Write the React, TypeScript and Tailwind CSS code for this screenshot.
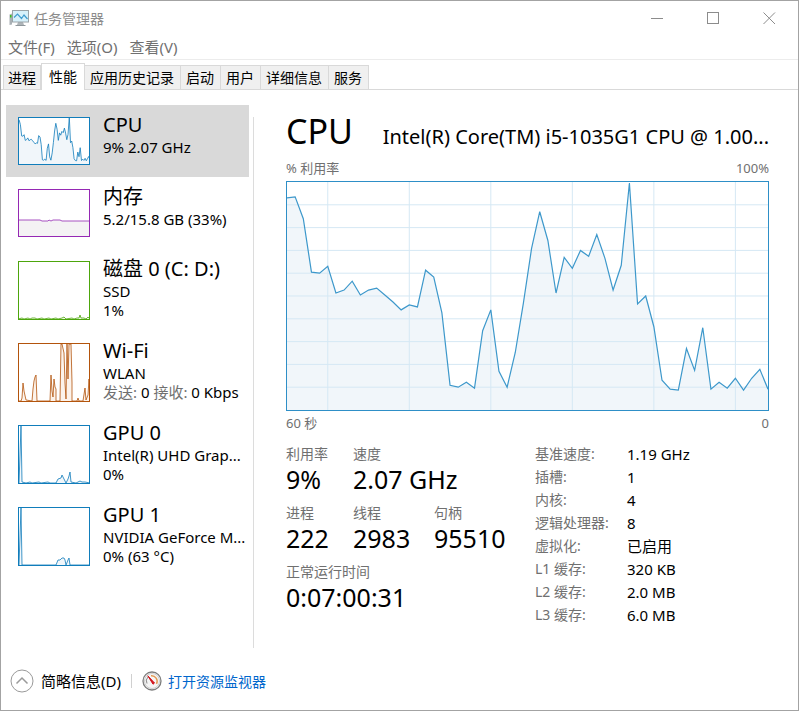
import { useState } from 'react';
import clsx from 'clsx';

const menus = ['文件(F)', '选项(O)', '查看(V)'];
const tabs = ['进程', '性能', '应用历史记录', '启动', '用户', '详细信息', '服务'];

// one sample per second, oldest first, 0..230
const cpuSamples = [
  214, 215, 193, 139, 138, 145, 118, 121, 130, 116, 121, 123, 116, 109, 101, 106, 104, 141, 134, 98,
  25, 23, 28, 22, 80, 101, 39, 23, 58, 108, 163, 200, 171, 118, 154, 143, 161, 155, 177, 153,
  121, 146, 229, 107, 115, 84, 30, 21, 20, 62, 40, 83, 21, 28, 22, 32, 20, 32, 41, 21,
];

const plot = (samples: number[], width: number, height: number) =>
  samples
    .map((v, i) => `${((i * width) / (samples.length - 1)).toFixed(1)},${(height - (v * height) / 230).toFixed(1)}`)
    .join(' ');

const resources = [
  {
    name: 'CPU',
    lines: ['9% 2.07 GHz'],
    height: 48,
    stroke: '#117dbb',
    fill: '#f1f6fa',
    points: plot(cpuSamples, 72, 48),
  },
  {
    name: '内存',
    lines: ['5.2/15.8 GB (33%)'],
    height: 48,
    stroke: '#9528b4',
    fill: '#f4f2f4',
    points: '0,31 22,31 24,32 30,32 31,31 33,32 35,31 42,31 44,32 72,32',
  },
  {
    name: '磁盘 0 (C: D:)',
    lines: ['SSD', '1%'],
    height: 59,
    stroke: '#4da60c',
    fill: '#eff7e9',
    points:
      '0,58 4,57 6,58 10,57 12,58 14,57 17,57 19,58 24,57 26,58 31,57 33,58 38,57 40,58 44,57 46,56 48,58 54,57 56,58 59,57 61,57 62,54 63,57 66,57 68,58 70,56 72,58',
  },
  {
    name: 'Wi-Fi',
    lines: ['WLAN'],
    height: 59,
    stroke: '#b3540c',
    fill: '#fcf3eb',
    points:
      '0,58 3,58 4,55 5,40 6,48 8,57 14,58 15,46 16,38 17,34 18,32 19,58 32,58 33,32 34,48 35,54 36,36 37,44 38,46 38,58 42,58 43,1 44,1 46,10 47,40 48,56 49,1 50,36 51,1 53,1 54,40 54,58 59,58 60,55 61,58 65,58 67,45 68,57 70,52 71,36 72,50',
  },
  {
    name: 'GPU 0',
    lines: ['Intel(R) UHD Grap...', '0%'],
    height: 59,
    stroke: '#117dbb',
    fill: '#f1f6fa',
    points:
      '0,58 1,58 3,1 4,57 8,58 12,57 14,58 21,57 23,58 30,57 32,58 38,58 40,54 43,53 44,50 46,54 48,58 50,54 51,51 52,47 53,57 58,58 60,57 62,56 64,57 67,57 72,58',
  },
  {
    name: 'GPU 1',
    lines: ['NVIDIA GeForce M...', '0% (63 °C)'],
    height: 59,
    stroke: '#117dbb',
    fill: '#f1f6fa',
    points: '0,58 1,58 3,1 4,58 38,58 40,53 42,53 44,51 46,51 47,53 48,58 50,53 51,51 52,58 62,58 72,58',
  },
];

const specs = [
  ['基准速度:', '1.19 GHz'],
  ['插槽:', '1'],
  ['内核:', '4'],
  ['逻辑处理器:', '8'],
  ['虚拟化:', '已启用'],
  ['L1 缓存:', '320 KB'],
  ['L2 缓存:', '2.0 MB'],
  ['L3 缓存:', '6.0 MB'],
];

function AppIcon() {
  return (
    <svg width="20" height="18" viewBox="0 0 20 18" fill="none">
      <path d="M0.5 5.5 3 4.5v11l-2.5.5z" fill="#a9b0b5" />
      <path d="M1 6h1.500v2.500H1z" fill="#39c01f" />
      <path d="M9 13h5l1 3H8z" fill="#aeb4b8" />
      <path d="M6.500 16.500h10" stroke="#8f979c" />
      <rect x="3.500" y="1.500" width="16" height="11.500" fill="#d6f1fb" stroke="#9aa3a8" />
      <path d="M5 8.500 8.500 5l4 4.500L15 6l3.500 4" stroke="#3f9ccf" strokeWidth="1.200" />
    </svg>
  );
}

function MonitorIcon() {
  return (
    <svg width="20" height="20" viewBox="0 0 20 20" fill="none">
      <circle cx="10" cy="10" r="9" fill="#f5f5f5" stroke="#7d7d7d" strokeWidth="1.300" />
      <circle cx="10" cy="10" r="7.500" stroke="#cfcfcf" />
      <path d="M5 12.500A5.500 5.500 0 0 1 6 6" stroke="#8a8a8a" />
      <path d="M9 4.800a5.500 5.500 0 0 1 5.500 8" stroke="#e39a55" strokeWidth="1.500" />
      <path d="M5.800 4.800 12.500 12l-1.500 1.200z" fill="#d3111b" stroke="#d3111b" />
    </svg>
  );
}

function Thumb({ height, stroke, fill, points }: { height: number; stroke: string; fill: string; points: string }) {
  return (
    <svg width="72" height={height} viewBox={`0 0 72 ${height}`} className="shrink-0">
      <rect width="72" height={height} fill="#fff" />
      <polygon points={`0,${height} ${points} 72,${height}`} fill={fill} />
      <polyline points={points} fill="none" stroke={stroke} strokeOpacity="0.8" />
      <rect x="0.5" y="0.5" width="71" height={height - 1} fill="none" stroke={stroke} />
    </svg>
  );
}

function CpuChart() {
  const points = plot(cpuSamples, 590, 230);
  return (
    <div className="h-[230px] border border-[#2e8fc7]">
      <svg className="block h-full w-full" viewBox="0 0 590 230" preserveAspectRatio="none">
        <polygon points={`0,230 ${points} 590,230`} fill="#f1f6fa" />
        {[50, 150, 250, 350, 450, 550].map((x) => (
          <line key={x} x1={x} x2={x} y1="0" y2="230" stroke="#d5e8f4" vectorEffect="non-scaling-stroke" />
        ))}
        {[23, 46, 69, 92, 115, 138, 161, 184, 207].map((y) => (
          <line key={y} x1="0" x2="590" y1={y} y2={y} stroke="#d5e8f4" vectorEffect="non-scaling-stroke" />
        ))}
        <polyline points={points} fill="none" stroke="#3d98cb" strokeWidth="1.2" vectorEffect="non-scaling-stroke" />
      </svg>
    </div>
  );
}

function Stat({ label, value, className }: { label: string; value: string; className?: string }) {
  return (
    <div className={className}>
      <dt className="text-[14px] leading-6 text-[#707070]">{label}</dt>
      <dd className="text-[25px] leading-[26px]">{value}</dd>
    </div>
  );
}

export default function App() {
  const [tab, setTab] = useState('性能');
  const [selected, setSelected] = useState('CPU');

  return (
    <div className="flex min-h-screen flex-col border border-[#a3a3a3] bg-white font-['Noto_Sans','Noto_Sans_CJK_SC',sans-serif] text-[14px] text-black">
      <header className="flex h-[34px] items-center justify-between pr-px pl-2">
        <h1 className="flex items-center gap-[5px] text-[#8c8c8c]">
          <AppIcon />
          任务管理器
        </h1>
        <div className="flex">
          <button aria-label="最小化" className="flex h-8 w-14 items-center justify-center">
            <svg width="13" height="13" viewBox="0 0 13 13" stroke="#8c8c8c">
              <path d="M0 6.500h12" />
            </svg>
          </button>
          <button aria-label="最大化" className="flex h-8 w-14 items-center justify-center">
            <svg width="13" height="13" viewBox="0 0 13 13" fill="none" stroke="#8c8c8c">
              <rect x="0.500" y="0.500" width="11" height="11" />
            </svg>
          </button>
          <button aria-label="关闭" className="flex h-8 w-14 items-center justify-center">
            <svg width="13" height="13" viewBox="0 0 13 13" stroke="#8c8c8c">
              <path d="M0.500 0.500 12 12M12 0.500 0.500 12" />
            </svg>
          </button>
        </div>
      </header>

      <nav className="flex h-[25px] items-center gap-3 border-b border-[#ececec] pl-[7px] text-[15px] text-[#707070]">
        {menus.map((m) => (
          <button key={m}>{m}</button>
        ))}
      </nav>

      <div role="tablist" className="flex h-[30px] items-end border-b border-[#d9d9d9] pl-0.5">
        {tabs.map((t) => (
          <button
            key={t}
            role="tab"
            aria-selected={t === tab}
            onClick={() => setTab(t)}
            className={clsx(
              'border-[#d9d9d9] whitespace-nowrap',
              t === tab
                ? '-mb-px h-[27px] border-x border-t bg-white px-[7px] pb-0.5'
                : 'h-6 border-t border-r bg-[#f0f0f0] pr-1.5 pl-[5px] first:border-l first:px-1',
            )}
          >
            {t}
          </button>
        ))}
      </div>

      <main className="flex flex-1 pt-[15px] pb-1">
        <aside className="w-[248px] shrink-0 pl-[5px]">
          {resources.map((r) => (
            <button
              key={r.name}
              onClick={() => setSelected(r.name)}
              className={clsx(
                'flex w-full items-start gap-[13px] overflow-hidden pt-3 pl-3 text-left whitespace-nowrap',
                r.height === 48 ? 'h-[72px]' : 'h-[82px]',
                r.name === selected && 'bg-[#d9d9d9]',
              )}
            >
              <Thumb height={r.height} stroke={r.stroke} fill={r.fill} points={r.points} />
              <span className="-mt-[5px] flex flex-col text-[15px] leading-[19px]">
                <span className="text-[20px] leading-[26px]">{r.name}</span>
                {r.lines.map((l) => (
                  <span key={l}>{l}</span>
                ))}
                {r.name === 'Wi-Fi' && (
                  <span>
                    <span className="text-[#707070]">发送:</span> 0 <span className="text-[#707070]">接收:</span> 0 Kbps
                  </span>
                )}
              </span>
            </button>
          ))}
        </aside>

        <section className="mt-3 ml-1 min-w-0 flex-1 border-l border-[#dcdcdc] pr-[29px] pl-8">
          <div className="-mt-2.5 flex h-[42px] items-baseline justify-between gap-6">
            <h2 className="text-[34px] leading-[48px]">CPU</h2>
            <span className="truncate text-[20px]">Intel(R) Core(TM) i5-1035G1 CPU @ 1.00...</span>
          </div>
          <div className="mt-2 flex justify-between pb-0.5 text-[13px] leading-[22px] text-[#707070]">
            <span>% 利用率</span>
            <span>100%</span>
          </div>
          <CpuChart />
          <div className="flex justify-between text-[13px] leading-6 text-[#707070]">
            <span>60 秒</span>
            <span>0</span>
          </div>

          <div className="mt-[7px] flex items-start">
            <dl className="flex w-[249px] shrink-0 flex-wrap gap-y-[9px]">
              <Stat label="利用率" value="9%" className="w-[67px]" />
              <Stat label="速度" value="2.07 GHz" className="w-[182px]" />
              <Stat label="进程" value="222" className="w-[67px]" />
              <Stat label="线程" value="2983" className="w-[81px]" />
              <Stat label="句柄" value="95510" className="w-[101px]" />
              <Stat label="正常运行时间" value="0:07:00:31" className="w-full" />
            </dl>
            <table>
              <tbody>
                {specs.map(([label, value]) => (
                  <tr key={label} className="h-[23px]">
                    <th scope="row" className="w-[92px] p-0 text-left leading-5 font-normal whitespace-nowrap text-[#707070]">
                      {label}
                    </th>
                    <td className="p-0 text-[15px] leading-5 whitespace-nowrap">{value}</td>
                  </tr>
                ))}
              </tbody>
            </table>
          </div>
        </section>
      </main>

      <footer className="flex h-[58px] shrink-0 items-center pl-[9px]">
        <button className="flex items-center gap-[7px] text-[15px]">
          <svg width="24" height="24" viewBox="0 0 24 24" fill="none" stroke="#9a9a9a">
            <circle cx="12" cy="12" r="11" />
            <path d="M6.500 14.500 12 9l5.500 5.500" strokeWidth="1.500" />
          </svg>
          简略信息(D)
        </button>
        <span className="mx-[10px] h-[14px] w-px bg-[#d0d0d0]" />
        <a href="#resmon" className="flex items-center gap-[6px] text-[#0066cc]">
          <MonitorIcon />
          打开资源监视器
        </a>
      </footer>
    </div>
  );
}
